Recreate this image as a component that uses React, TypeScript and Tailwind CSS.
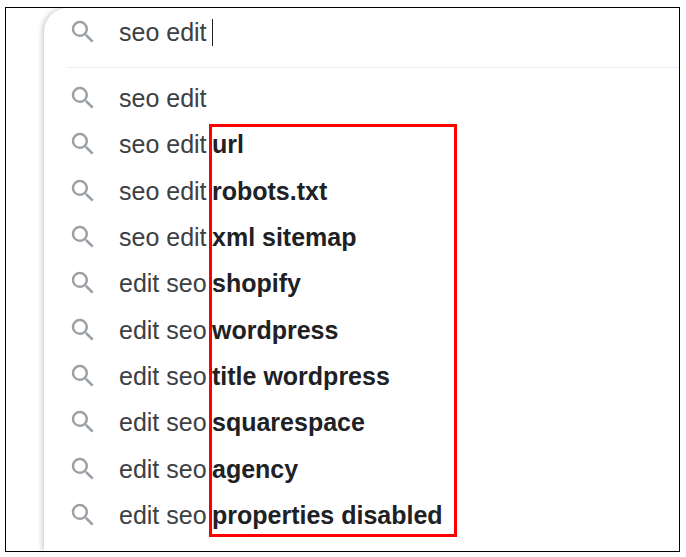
const SearchIcon = () => (
  <svg width="30" height="30" viewBox="0 0 24 24" fill="#9aa0a6" className="shrink-0 ml-px">
    <path d="M15.5 14h-.79l-.28-.27A6.471 6.471 0 0 0 16 9.5 6.5 6.5 0 1 0 9.5 16c1.61 0 3.09-.59 4.23-1.57l.27.28v.79l5 4.99L20.49 19l-4.99-5zm-6 0C7.01 14 5 11.99 5 9.5S7.01 5 9.5 5 14 7.01 14 9.5 11.99 14 9.5 14z" />
  </svg>
);

const rows = [
  ["seo edit", ""],
  ["seo edit", "url"],
  ["seo edit", "robots.txt"],
  ["seo edit", "xml sitemap"],
  ["edit seo", "shopify"],
  ["edit seo", "wordpress"],
  ["edit seo", "title wordpress"],
  ["edit seo", "squarespace"],
  ["edit seo", "agency"],
  ["edit seo", "properties disabled"],
];

export default function App() {
  return (
    <div className="w-[686px] h-[557px] bg-white pt-[7px] pl-[5px] font-['Liberation_Sans',Arial,sans-serif] overflow-hidden">
      <div className="relative w-[675px] h-[545px] border border-black bg-white overflow-hidden pl-[38px]">
        <div className="h-full rounded-tl-[24px] bg-white shadow-[-2px_0_5px_rgba(32,33,36,0.22)] pl-[23px]">
          <div className="h-[60px] pb-[11px] flex items-center border-b border-[#e8eaed] -mb-px">
            <SearchIcon />
            <span className="ml-[21px] text-[25px] leading-[30px] text-[#3c4043]">seo edit</span>
            <span className="ml-[5px] w-px h-[27px] bg-[#202124]" />
          </div>
          <div className="flex flex-col pt-[8px]">
            {rows.map(([base, bold]) => (
              <div key={base + bold} className="h-[46.3px] flex items-center">
                <SearchIcon />
                <span className="ml-[21px] text-[25px] leading-[30px] text-[#3c4043] w-[93px] whitespace-pre">{base}</span>
                <span className="text-[25px] leading-[30px] font-bold text-[#202124] whitespace-pre">{bold}</span>
              </div>
            ))}
          </div>
        </div>
        <div className="absolute left-[203px] top-[116px] w-[248px] h-[413px] border-[3px] border-[#ff0000]" />
      </div>
    </div>
  );
}
